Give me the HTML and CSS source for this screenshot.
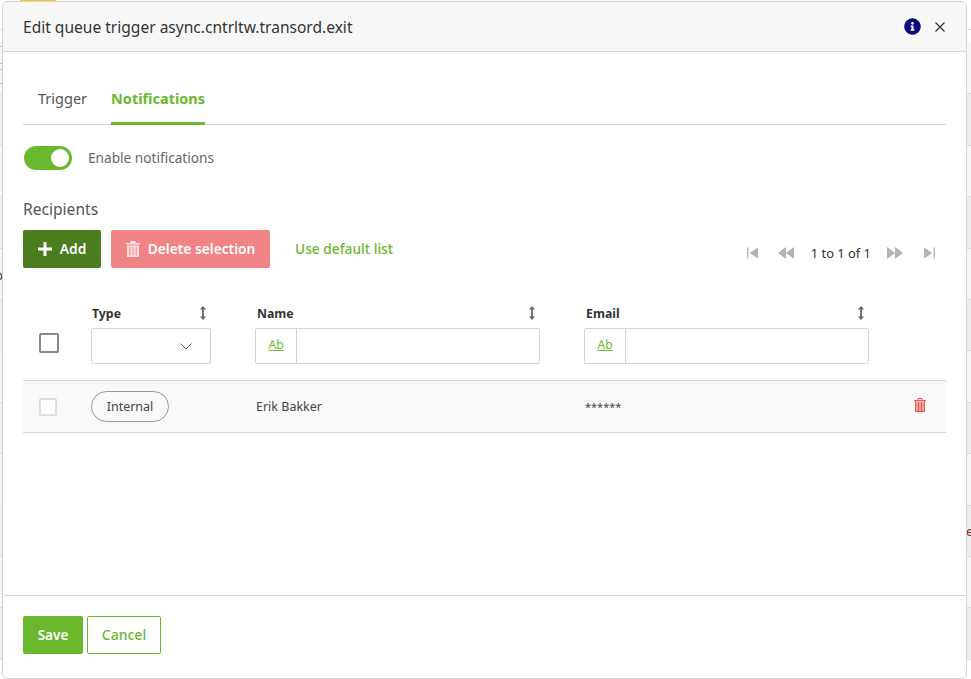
FILE: index.html
```html
<!DOCTYPE html>
<html lang="en">
<head>
<meta charset="utf-8">
<title>Edit queue trigger</title>
<link rel="stylesheet" href="styles.css">
</head>
<body>
<div class="backdrop">
  <div class="bg-top"></div>
  <div class="bg-gap"></div>
  <div class="bg-row"></div><div class="bg-row alt"></div><div class="bg-row"></div><div class="bg-row alt"></div><div class="bg-row"></div><div class="bg-row alt"></div><div class="bg-row"></div><div class="bg-row alt"></div><div class="bg-row"></div><div class="bg-row alt"></div><div class="bg-row"></div><div class="bg-row alt"></div>
  <span class="bg-chip"></span>
  <span class="bg-mark m1"></span><span class="bg-mark m2"></span><span class="bg-mark m3"></span><span class="bg-mark m4"></span>
  <span class="bg-frag frag-left">p</span>
  <span class="bg-frag frag-right">e</span>
</div>
<section class="modal">
  <header class="modal-head">
    <h1 class="modal-title">Edit queue trigger async.cntrltw.transord.exit</h1>
    <div class="head-tools">
      <svg class="info" viewBox="0 0 512 512"><path d="M256 8C119.043 8 8 119.083 8 256c0 136.997 111.043 248 248 248s248-111.003 248-248C504 119.083 392.957 8 256 8zm0 110c23.196 0 42 18.804 42 42s-18.804 42-42 42-42-18.804-42-42 18.804-42 42-42zm56 254c0 6.627-5.373 12-12 12h-88c-6.627 0-12-5.373-12-12v-24c0-6.627 5.373-12 12-12h12v-64h-12c-6.627 0-12-5.373-12-12v-24c0-6.627 5.373-12 12-12h64c6.627 0 12 5.373 12 12v100h12c6.627 0 12 5.373 12 12v24z"/></svg>
      <svg class="close" viewBox="0 0 10 10"><path d="M.5.5l9 9M9.500.5l-9 9"/></svg>
    </div>
  </header>
  <div class="modal-body">
    <nav class="tabs">
      <a class="tab">Trigger</a>
      <a class="tab active">Notifications</a>
    </nav>
    <div class="enable">
      <span class="toggle"><span class="knob"></span></span>
      <span class="enable-label">Enable notifications</span>
    </div>
    <h2 class="section">Recipients</h2>
    <div class="toolbar">
      <button class="btn btn-add">
        <svg class="plus" viewBox="0 0 14 14"><path d="M5.500 0h3v5.500H14v3H8.500V14h-3V8.500H0v-3h5.500z"/></svg><span class="btn-text">Add</span>
      </button>
      <button class="btn btn-del">
        <svg class="trash" viewBox="0 0 14 16"><path d="M5 0h4l1 2h4v1.500H0V2h4zM1 4.500h12V16H1zM3.300 6v8.500h1.100V6zM6.450 6v8.500h1.100V6zM9.600 6v8.500h1.100V6z" fill-rule="evenodd"/></svg><span class="btn-text">Delete selection</span>
      </button>
      <a class="link-default">Use default list</a>
      <div class="pager">
        <svg class="pg pg-one" viewBox="0 0 12 14"><path d="M0 1h1.500v12H0zM12 1v12L3 7z"/></svg>
        <svg class="pg pg-two" viewBox="0 0 16 14"><path d="M8 1v12L0 7zM16 1v12L8 7z"/></svg>
        <span class="pg-text">1 to 1 of 1</span>
        <svg class="pg pg-three" viewBox="0 0 16 14"><path d="M0 1v12l8-6zM8 1v12l8-6z"/></svg>
        <svg class="pg pg-four" viewBox="0 0 12 14"><path d="M0 1v12l9-6zM10.500 1H12v12h-1.500z"/></svg>
      </div>
    </div>
    <div class="grid grid-head">
      <div class="cell-check"><span class="check"></span></div>
      <div class="col col-type">
        <div class="col-label"><span>Type</span><svg class="sort" viewBox="0 0 8 16"><path d="M4 0l3.500 4H5v8h2.500L4 16 .5 12H3V4H.5z"/></svg></div>
        <div class="select"><svg class="chev" viewBox="0 0 12 7"><path d="M.5.500L6 6l5.500-5.500"/></svg></div>
      </div>
      <div class="col col-name">
        <div class="col-label"><span>Name</span><svg class="sort" viewBox="0 0 8 16"><path d="M4 0l3.500 4H5v8h2.500L4 16 .5 12H3V4H.5z"/></svg></div>
        <div class="filter"><span class="ab">Ab</span><input class="filter-input" type="text" aria-label="Name"></div>
      </div>
      <div class="col col-email">
        <div class="col-label"><span>Email</span><svg class="sort" viewBox="0 0 8 16"><path d="M4 0l3.500 4H5v8h2.500L4 16 .5 12H3V4H.5z"/></svg></div>
        <div class="filter"><span class="ab">Ab</span><input class="filter-input" type="text" aria-label="Email"></div>
      </div>
    </div>
    <div class="grid grid-row">
      <div class="cell-check"><span class="check check-row"></span></div>
      <div class="col-type"><span class="pill">Internal</span></div>
      <div class="col-name cell-text">Erik Bakker</div>
      <div class="col-email cell-text stars">******</div>
      <svg class="row-trash" viewBox="0 0 12 14"><path class="rt-fill" d="M1.500 3.500h9V13.500h-9z"/><path class="rt-line" d="M0 2.500h12M4 2.500V.5h4v2M1.500 2.500v11h9v-11M4.500 4v9M7.500 4v9"/></svg>
    </div>
  </div>
  <footer class="modal-foot">
    <button class="btn btn-save">Save</button>
    <button class="btn btn-cancel">Cancel</button>
  </footer>
</section>
</body>
</html>
```
FILE: styles.css
```css
* { box-sizing: border-box; }
html, body { margin: 0; height: 100%; overflow: hidden; background: #fff; }
body { position: relative; font-family: "Noto Sans", "Open Sans", sans-serif; color: #333; }

.backdrop { height: 679px; overflow: hidden; position: relative; background: #fff; }
.bg-top { height: 30px; border-bottom: 1px solid #ddd; }
.bg-gap { height: 13px; }
.bg-row { height: 51.4px; border-bottom: 1px solid #ddd; background: #f7f7f7; }
.bg-row.alt { background: #eee; }
.bg-chip { position: absolute; left: 20px; top: 0; width: 36px; height: 1px; background: #f5c518; }
.bg-mark { position: absolute; left: 0; width: 3px; height: 1px; background: #a9cf8a; }
.m1 { top: 46px; } .m2 { top: 63px; } .m3 { top: 69px; } .m4 { top: 83px; }
.bg-frag { position: absolute; font-size: 13px; line-height: 16px; }
.frag-left { left: -5px; top: 267px; color: #333; }
.frag-right { left: 966px; top: 523px; color: #8b1a2b; }

.modal { position: absolute; left: 2px; top: 1px; width: 965px; height: 678px; display: flex; flex-direction: column; background: #fff; border: 1px solid #d4d4d4; border-radius: 5px; overflow: hidden; }
.modal-head { height: 50px; flex: none; display: flex; align-items: center; justify-content: space-between; padding: 0 20px; background: #f7f7f7; border-bottom: 1px solid #d8d8d8; }
.modal-title { margin: 0; font-size: 15.560px; font-weight: 400; color: #333; }
.head-tools { display: flex; align-items: center; gap: 14px; margin-right: 1px; }
.info { width: 17px; height: 17px; fill: #0b0b7c; display: block; }
.close { width: 10px; height: 10px; stroke: #333; stroke-width: 1.200; fill: none; display: block; }

.modal-body { flex: 1; padding: 0 20px; min-height: 0; }
.tabs { height: 73px; display: flex; align-items: flex-end; gap: 24px; border-bottom: 1px solid #d4d4d4; padding-left: 15px; }
.tab { font-size: 14.500px; height: 44px; line-height: 35px; color: #555; margin-bottom: -1px; }
.tab.active { color: #6ab82e; font-weight: 700; border-bottom: 3px solid #6ab82e; }

.enable { display: flex; align-items: center; gap: 16px; margin-top: 21px; margin-left: 1px; }
.toggle { width: 48px; height: 24px; border-radius: 12px; background: #6ab82e; display: flex; align-items: center; justify-content: flex-end; padding-right: 3px; }
.knob { width: 18px; height: 18px; border-radius: 50%; background: #fff; }
.enable-label { font-size: 13.650px; color: #666; padding-bottom: 2px; }

.section { margin: 29px 0 0; font-size: 15.600px; font-weight: 400; line-height: 20px; color: #555; }

.toolbar { display: flex; align-items: center; height: 38px; margin-top: 11px; }
.btn { height: 38px; border: 0; border-radius: 2px; font: 600 14px "Noto Sans", sans-serif; color: #fff; display: inline-flex; align-items: center; justify-content: center; padding: 0; }
.btn-text { position: relative; top: -1px; }
.btn-add { width: 78px; background: #4a7c20; gap: 8px; font-size: 13.800px; }
.btn-del { width: 159px; background: #f08484; margin-left: 10px; gap: 8px; font-size: 13.750px; }
.plus { width: 14px; height: 14px; fill: #fff; }
.trash { width: 14px; height: 16px; fill: #fbe3e3; }
.link-default { margin-left: 25px; font-size: 13.750px; font-weight: 500; color: #6ab82e; position: relative; top: -1px; }

.pager { margin-left: auto; margin-right: 11px; display: flex; align-items: center; margin-top: 8px; }
.pg { height: 14px; fill: #b3b3bb; display: block; }
.pg-one { width: 11px; }
.pg-two { width: 16px; margin-left: 20px; }
.pg-text { font-size: 12.900px; color: #333; margin-left: 17px; margin-right: 16px; }
.pg-three { width: 16px; }
.pg-four { width: 11px; margin-left: 21px; }

.grid { display: grid; grid-template-columns: 68px 164px 329px 300px; position: relative; }
.grid-head { margin-top: 32px; height: 80px; align-items: start; }
.cell-check { padding-left: 16px; }
.grid-head .cell-check { padding-top: 33px; }
.check { display: block; width: 20px; height: 20px; border: 2px solid #888; border-radius: 2px; background: #fff; }
.col-label { display: flex; justify-content: space-between; align-items: center; width: 285px; height: 26px; margin-bottom: 2px; padding: 0 4px 0 2px; font-size: 12.300px; font-weight: 700; color: #333; }
.col-type .col-label { width: 120px; padding-left: 1px; }
.sort { width: 8px; height: 14px; fill: #666; display: block; }
.select { height: 36px; width: 120px; border: 1px solid #d4d4d4; border-radius: 2px; position: relative; background: #fff; }
.chev { position: absolute; right: 18px; top: 14px; width: 12px; height: 7px; fill: none; stroke: #555; stroke-width: 1; }
.filter { height: 36px; width: 285px; display: flex; border: 1px solid #d4d4d4; border-radius: 2px; background: #fff; }
.ab { flex: none; width: 41px; border-right: 1px solid #d4d4d4; text-align: center; font-size: 12px; line-height: 32px; color: #6ab82e; text-decoration: underline; }
.filter-input { flex: 1; min-width: 0; border: 0; outline: 0; background: transparent; }

.grid-row { height: 53px; align-items: center; background: #f9f9f9; border-top: 1px solid #d8d8d8; border-bottom: 1px solid #d8d8d8; }
.check-row { width: 18px; height: 18px; border-color: #ddd; }
.pill { display: inline-block; height: 31px; width: 78px; line-height: 29px; text-align: center; border: 1px solid #999; border-radius: 16px; font-size: 12.500px; color: #444; }
.cell-text { font-size: 12.500px; color: #444; padding-left: 1px; }
.stars { font-size: 11px; padding-bottom: 1px; }
.row-trash { position: absolute; right: 20px; top: 17px; width: 12px; height: 14px; }
.rt-fill { fill: #f2a5a5; }
.rt-line { fill: none; stroke: #ec5252; stroke-width: 1; }

.modal-foot { flex: none; height: 83px; border-top: 1px solid #d8d8d8; padding: 20px 20px 0; display: flex; gap: 4px; align-items: flex-start; }
.btn-save { width: 60px; background: #6ab82e; font-size: 13.500px; }
.btn-cancel { width: 74px; background: #fff; border: 1px solid #6ab82e; color: #6ab82e; font-weight: 500; padding-bottom: 2px; }
```
